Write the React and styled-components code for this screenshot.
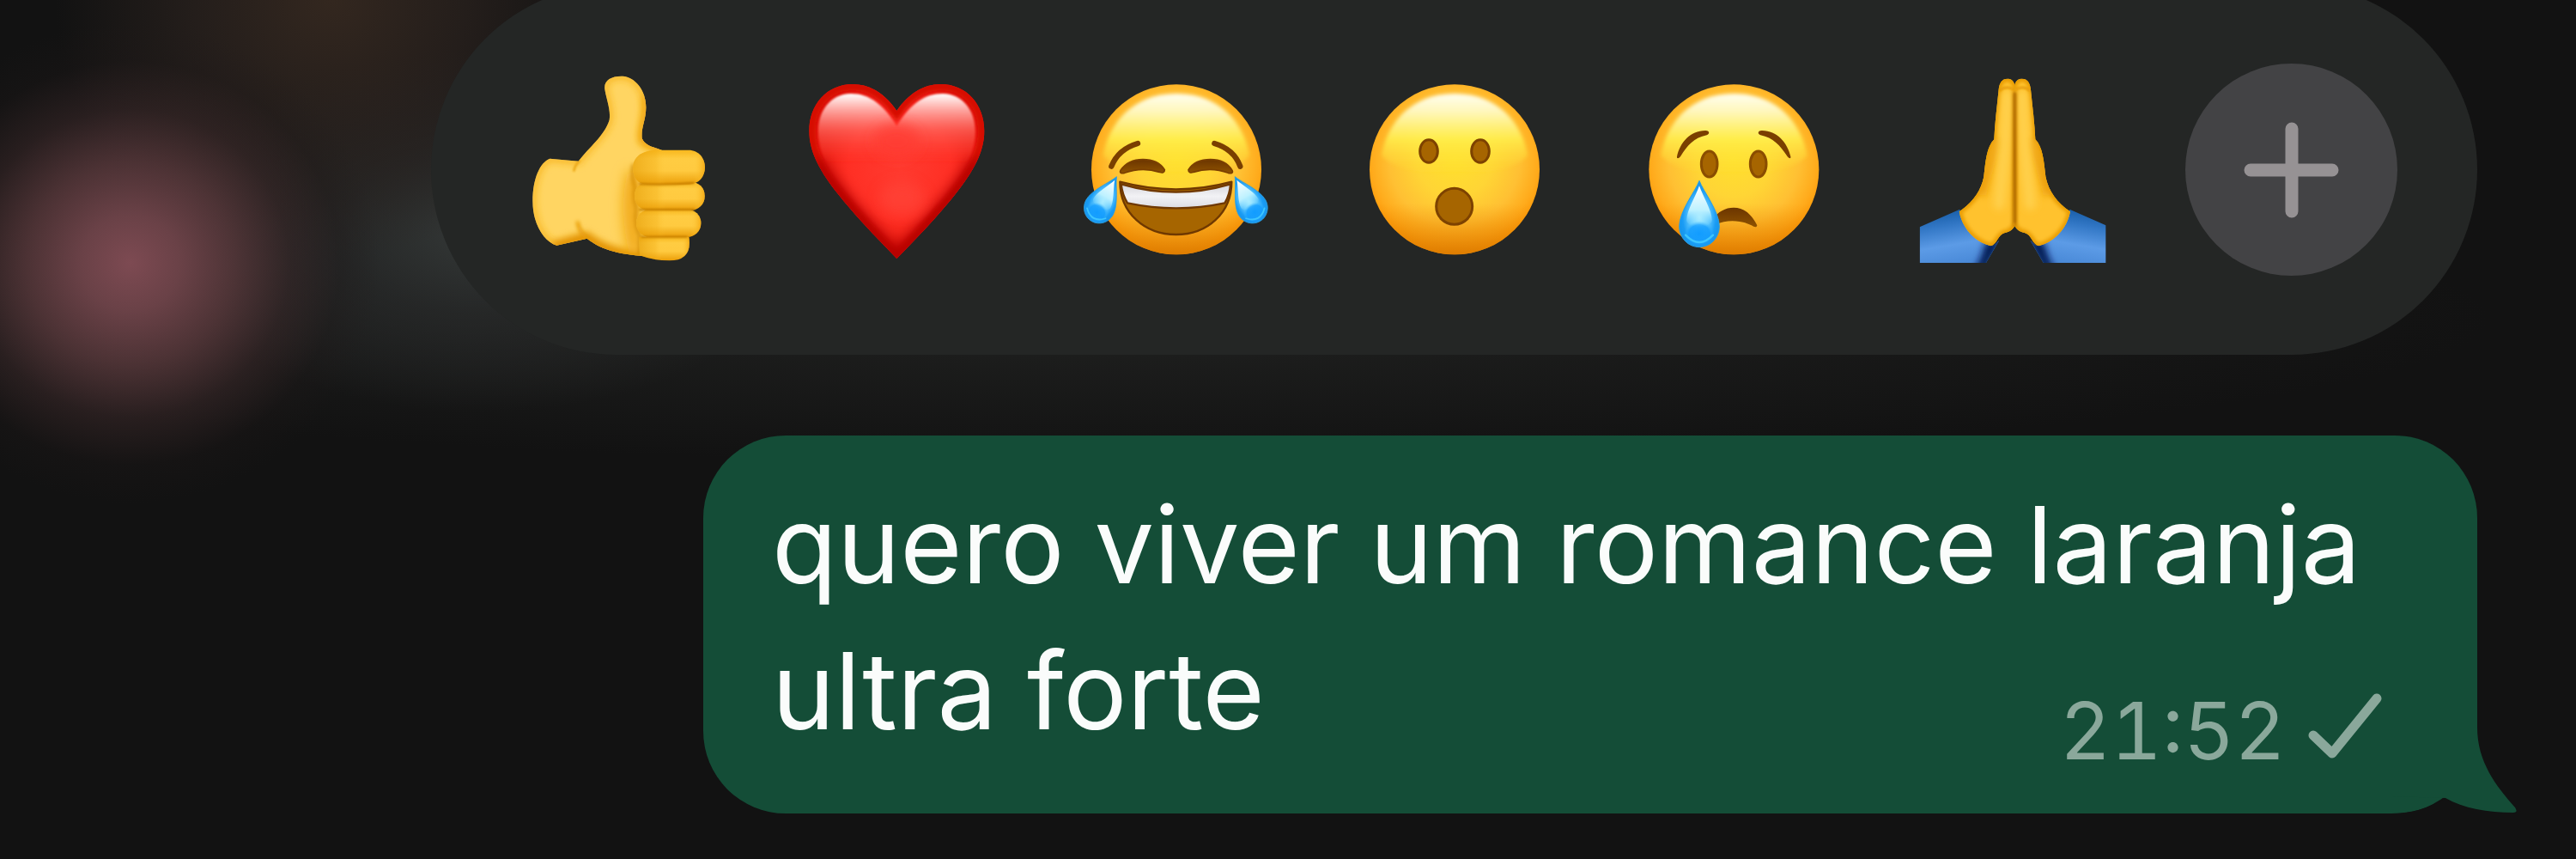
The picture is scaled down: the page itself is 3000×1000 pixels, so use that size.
import React from "react";
import styled, { createGlobalStyle } from "styled-components";

const GlobalStyle = createGlobalStyle`
  * { box-sizing: border-box; }
  body { margin: 0; background: #121212; font-family: Inter, "Liberation Sans", sans-serif; }
`;

const Screen = styled.main`
  min-height: 100vh;
  overflow: hidden;
  display: flex;
  flex-direction: column;
  align-items: flex-end;
  gap: 94px;
  padding-right: 115px;
  background:
    radial-gradient(ellipse 290px 280px at 152px 306px, #7d4a52 0%, #6f444af0 20%, #5b3a3dc8 42%, #3c292a88 64%, #20191940 84%, #12121200 100%),
    radial-gradient(ellipse 320px 300px at 385px 0px, #33271f 0%, #2c231fb0 50%, #12121200 100%),
    radial-gradient(ellipse 380px 210px at 560px 270px, #343837 0%, #2c2e2ea8 45%, #12121200 100%),
    radial-gradient(ellipse 1600px 170px at 1300px 370px, #202120 0%, #12121200 100%),
    #121212;
`;

const ReactionBar = styled.div`
  width: 2383px;
  max-width: 100%;
  height: 431px;
  margin-top: -18px;
  padding: 0 54px;
  display: grid;
  grid-template-columns: repeat(7, 1fr);
  align-items: center;
  justify-items: center;
  border-radius: 216px;
  background: #242625;
`;

const ReactionButton = styled.button`
  width: ${(p) => (p.$filled ? 247 : 260)}px;
  height: ${(p) => (p.$filled ? 247 : 260)}px;
  padding: 0;
  border: 0;
  border-radius: ${(p) => (p.$filled ? "50%" : "0")};
  background: ${(p) => (p.$filled ? "#434345" : "transparent")};
  display: flex;
  align-items: center;
  justify-content: center;
`;

const Glyph = styled.svg`
  display: block;
  width: 100%;
  height: 100%;
`;

const Bubble = styled.article`
  position: relative;
  width: 2066px;
  max-width: 100%;
  padding: 42px 111px 40px 80px;
  border-radius: 96px;
  background: #144d37;
`;

const Row = styled.div`
  display: flex;
  justify-content: space-between;
  min-height: ${(p) => (p.$last ? 188 : 170)}px;
`;

const Line = styled.span`
  font-size: 124px;
  line-height: 170px;
  color: #fafcfb;
`;

const Meta = styled.div`
  align-self: flex-end;
  display: flex;
  align-items: baseline;
  gap: 26px;
  color: #8aa89b;
`;

const Time = styled.time`
  font-size: 92px;
  line-height: 112px;
  font-variant-numeric: tabular-nums;
`;

const Check = styled.svg`
  width: 86px;
  height: 80px;
`;

const Tail = styled.svg`
  position: absolute;
  right: -46px;
  bottom: 0;
  width: 146px;
  height: 120px;
`;

function Defs() {
  const area = { filterUnits: "userSpaceOnUse", x: -100, y: -100, width: 1000, height: 1000 };
  return (
    <defs>
      <radialGradient id="face" cx=".5" cy=".44" r=".58">
        <stop offset="0" stopColor="#ffe02e" />
        <stop offset=".38" stopColor="#ffd535" />
        <stop offset=".66" stopColor="#ffc033" />
        <stop offset=".84" stopColor="#ffab1c" />
        <stop offset="1" stopColor="#fb9100" />
      </radialGradient>
      <linearGradient id="faceLow" x1="0" y1="0" x2="0" y2="1">
        <stop offset=".7" stopColor="#f08c00" stopOpacity="0" />
        <stop offset="1" stopColor="#d97800" stopOpacity=".85" />
      </linearGradient>
      <linearGradient id="faceTop" x1="0" y1="0" x2="0" y2="1">
        <stop offset="0" stopColor="#fffff0" />
        <stop offset=".22" stopColor="#fffbc8" stopOpacity=".92" />
        <stop offset=".56" stopColor="#fff250" stopOpacity=".8" />
        <stop offset="1" stopColor="#ffe030" stopOpacity="0" />
      </linearGradient>
      <linearGradient id="brow" x1="0" y1="0" x2="0" y2="1">
        <stop offset="0" stopColor="#6b3500" />
        <stop offset="1" stopColor="#8f5300" />
      </linearGradient>
      <linearGradient id="teeth" x1="0" y1="0" x2="0" y2="1">
        <stop offset="0" stopColor="#d6d6dc" />
        <stop offset=".5" stopColor="#f2f2f5" />
        <stop offset="1" stopColor="#dcdce2" />
      </linearGradient>
      <radialGradient id="tear" cx=".5" cy=".55" r=".55">
        <stop offset="0" stopColor="#b8f4ff" />
        <stop offset=".4" stopColor="#66ccff" />
        <stop offset=".75" stopColor="#1a9cf5" />
        <stop offset="1" stopColor="#1593e8" />
      </radialGradient>
      <linearGradient id="tearShine" x1="0" y1="0" x2="0" y2="1">
        <stop offset="0" stopColor="#ffffff" />
        <stop offset=".6" stopColor="#bdf1ff" />
        <stop offset="1" stopColor="#7fd8ff" stopOpacity="0" />
      </linearGradient>
      <radialGradient id="tearPool" cx=".5" cy=".6" r=".5">
        <stop offset="0" stopColor="#119cff" />
        <stop offset=".7" stopColor="#119cff" stopOpacity=".8" />
        <stop offset="1" stopColor="#35b4ff" stopOpacity="0" />
      </radialGradient>
      <filter id="soft3" {...area}><feGaussianBlur stdDeviation="3" /></filter>
      <filter id="soft6" {...area}><feGaussianBlur stdDeviation="6" /></filter>
      <filter id="soft12" {...area}><feGaussianBlur stdDeviation="12" /></filter>
      <filter id="soft22" {...area}><feGaussianBlur stdDeviation="22" /></filter>
    </defs>
  );
}

function Face({ cx }) {
  return (
    <>
      <circle cx={cx} cy="379" r="297" fill="url(#face)" />
      <circle cx={cx} cy="379" r="297" fill="url(#faceLow)" />
      <path
        d={`M${cx} 114 C${cx + 150} 114 ${cx + 235} 215 ${cx + 255} 330 C${cx + 180} 420 ${cx - 180} 420 ${cx - 255} 330 C${cx - 235} 215 ${cx - 150} 114 ${cx} 114Z`}
        fill="url(#faceTop)"
        filter="url(#soft6)"
      />
    </>
  );
}

function Tear({ transform }) {
  return (
    <g transform={transform}>
      <path d="M0 -116 C14 -78 70 -10 70 44 A70 72 0 0 1 -70 44 C-70 -10 -14 -78 0 -116Z" fill="url(#tear)" stroke="#2c9ee0" strokeWidth="3" />
      <ellipse cx="0" cy="60" rx="52" ry="44" fill="url(#tearPool)" />
      <g transform="translate(0 0)">
        <path d="M0 -98 C12 -62 46 -10 44 24 C38 52 -38 52 -44 24 C-46 -10 -12 -62 0 -98Z" fill="url(#tearShine)" />
        <path d="M-48 74 Q0 124 48 74" fill="none" stroke="#49d0ff" strokeWidth="7" strokeLinecap="round" opacity=".8" />
      </g>
    </g>
  );
}

const palm =
  "M340 128 C336 98 362 82 402 83 C446 86 484 132 484 192 C484 236 466 264 470 300 C482 328 512 330 540 342 L640 342 L520 520 L500 712 C400 708 330 692 278 650 L172 674 C128 662 88 600 88 520 C88 440 114 384 148 371 L248 380 C286 330 338 292 356 236 C362 200 344 158 340 128Z";
const indexFinger =
  "M438 402 C438 366 470 342 520 341 H632 C708 341 710 461 632 461 H490 C454 461 438 436 438 402Z";
const littleFinger = "M460 645 H634 Q646 727 566 727 Q510 727 462 709Z";

function ThumbsUp() {
  return (
    <Glyph viewBox="-6 21 780 780" aria-hidden="true">
      <Defs />
      <defs>
        <clipPath id="palmClip"><path d={palm} /></clipPath>
        <linearGradient id="finger" x1="0" y1="0" x2="0" y2="1">
          <stop offset="0" stopColor="#f8b71c" />
          <stop offset=".25" stopColor="#ffcc42" />
          <stop offset=".6" stopColor="#ffca40" />
          <stop offset="1" stopColor="#eb9e08" />
        </linearGradient>
        <linearGradient id="fingerRoot" x1="0" y1="0" x2="1" y2="0">
          <stop offset="0" stopColor="#e39a05" stopOpacity=".6" />
          <stop offset=".32" stopColor="#efa910" stopOpacity=".3" />
          <stop offset=".45" stopColor="#ffc838" stopOpacity="0" />
          <stop offset=".85" stopColor="#ffc838" stopOpacity="0" />
          <stop offset="1" stopColor="#f2a40c" stopOpacity=".8" />
        </linearGradient>
      </defs>
      <path d={palm} fill="#ffd562" />
      <g clipPath="url(#palmClip)">
        <path d={palm} fill="none" stroke="#f7b31c" strokeWidth="20" filter="url(#soft12)" />
        <path d="M484 150 C496 220 470 260 474 310 L560 345" fill="none" stroke="#eea30c" strokeWidth="26" filter="url(#soft12)" />
        <path d="M160 680 L275 646 C330 690 400 712 480 714" fill="none" stroke="#e08f00" strokeWidth="34" filter="url(#soft12)" />
        <path d="M244 590 Q252 630 278 650" fill="none" stroke="#e89b08" strokeWidth="12" filter="url(#soft6)" />
        <path d="M252 376 Q234 396 232 416" fill="none" stroke="#eca818" strokeWidth="8" filter="url(#soft3)" />
        <path d="M446 420 C430 480 420 560 450 700" fill="none" stroke="#f0a510" strokeWidth="50" filter="url(#soft22)" />
        <path d="M440 390 Q432 440 446 470 Q438 510 450 545 Q442 600 462 640 V708" fill="none" stroke="#d38b00" strokeWidth="10" filter="url(#soft6)" />
      </g>
      <path d={littleFinger} fill="url(#finger)" />
      <path d={littleFinger} fill="url(#fingerRoot)" />
      <rect x="450" y="548" width="226" height="97" rx="48" fill="url(#finger)" />
      <rect x="450" y="548" width="226" height="97" rx="48" fill="url(#fingerRoot)" />
      <rect x="444" y="452" width="245" height="99" rx="48" fill="url(#finger)" />
      <rect x="444" y="452" width="245" height="99" rx="48" fill="url(#fingerRoot)" />
      <path d={indexFinger} fill="url(#finger)" />
      <path d={indexFinger} fill="url(#fingerRoot)" />
      <g fill="none" stroke="#c27c00" strokeWidth="6" strokeLinecap="round" filter="url(#soft3)">
        <path d="M462 459 Q550 464 650 456" />
        <path d="M462 549 H652" />
        <path d="M470 644 H626" />
      </g>
    </Glyph>
  );
}

const heart =
  "M400 204 C360 146 308 111 246 111 C156 111 94 182 94 274 C94 350 134 418 196 496 C256 572 330 648 400 720 C470 648 544 572 604 496 C666 418 706 350 706 274 C706 182 644 111 554 111 C492 111 440 146 400 204Z";

function Heart() {
  return (
    <Glyph viewBox="9 21 780 780" aria-hidden="true">
      <defs>
        <clipPath id="heartClip"><path d={heart} /></clipPath>
        <radialGradient id="heartFill" gradientUnits="userSpaceOnUse" cx="410" cy="400" r="330">
          <stop offset="0" stopColor="#ff3b30" />
          <stop offset=".55" stopColor="#ff2f24" />
          <stop offset="1" stopColor="#e01509" />
        </radialGradient>
        <linearGradient id="heartShine" gradientUnits="userSpaceOnUse" x1="0" y1="144" x2="0" y2="390">
          <stop offset="0" stopColor="#ffffff" />
          <stop offset=".2" stopColor="#ffb9b4" stopOpacity=".95" />
          <stop offset=".5" stopColor="#ff7068" stopOpacity=".7" />
          <stop offset="1" stopColor="#ff3b30" stopOpacity="0" />
        </linearGradient>
      </defs>
      <path d={heart} fill="url(#heartFill)" />
      <g clipPath="url(#heartClip)">
        <path d={heart} fill="none" stroke="#d60c04" strokeWidth="44" filter="url(#soft6)" />
        <path d="M110 380 Q230 560 400 720 Q570 560 690 380" fill="none" stroke="#b50600" strokeWidth="60" filter="url(#soft22)" />
        <path
          d="M400 258 C350 176 300 144 240 144 C166 146 126 206 126 276 C126 330 146 372 170 410 H630 C654 372 674 330 674 276 C674 206 634 146 560 144 C500 144 450 176 400 258Z"
          fill="url(#heartShine)"
          filter="url(#soft3)"
        />
        <ellipse cx="400" cy="310" rx="80" ry="60" fill="#ff3b30" opacity=".7" filter="url(#soft22)" />
        <ellipse cx="418" cy="510" rx="80" ry="60" fill="#ff4a3c" opacity=".55" filter="url(#soft22)" />
      </g>
    </Glyph>
  );
}

function Joy() {
  return (
    <Glyph viewBox="-6 -9 780 780" aria-hidden="true">
      <Face cx={387} />
      <g fill="none" stroke="#7a3f00" strokeWidth="19" strokeLinecap="round">
        <path d="M160 368 Q184 308 252 288" />
        <path d="M610 368 Q588 308 520 288" />
      </g>
      <g fill="url(#brow)" stroke="#7a3f00" strokeWidth="5" strokeLinejoin="round">
        <path d="M192 382 C210 356 236 344 270 344 C306 344 332 358 346 380 C346 390 338 392 328 388 C290 376 246 376 206 391 C194 394 188 390 192 382Z" />
        <path d="M429 380 C443 358 470 344 506 344 C540 344 566 356 582 382 C586 390 580 394 568 391 C528 376 486 376 447 388 C437 392 429 390 429 380Z" />
      </g>
      <path d="M190 422 Q386 474 580 422 C580 530 496 606 386 606 C276 606 190 530 190 422Z" fill="#a66500" stroke="#6f3800" strokeWidth="7" strokeLinejoin="round" />
      <path d="M194 430 Q386 486 576 430 Q574 466 556 496 Q386 532 216 496 Q198 466 194 430Z" fill="url(#teeth)" stroke="#6f3800" strokeWidth="7" strokeLinejoin="round" />
      <Tear transform="translate(135 482) rotate(29) scale(.77)" />
      <Tear transform="translate(635 482) rotate(-29) scale(.77)" />
    </Glyph>
  );
}

function Wow() {
  return (
    <Glyph viewBox="-21 -9 780 780" aria-hidden="true">
      <Face cx={369} />
      <g fill="#a66500" stroke="#7d4200" strokeWidth="9">
        <ellipse cx="279" cy="315" rx="31" ry="40" />
        <ellipse cx="459" cy="315" rx="31" ry="40" />
        <circle cx="368" cy="508" r="63" />
      </g>
    </Glyph>
  );
}

function Sad() {
  return (
    <Glyph viewBox="-6 -9 780 780" aria-hidden="true">
      <Face cx={385} />
      <g fill="#7a3f00">
        <path d="M186 334 C196 284 234 242 286 243 C302 244 300 256 290 259 C246 268 222 294 198 334 C192 342 184 342 186 334Z" />
        <path d="M583 334 C572 284 534 242 482 243 C466 244 468 256 478 259 C522 268 546 294 572 334 C578 342 585 342 583 334Z" />
      </g>
      <g fill="#a66500" stroke="#8a4d00" strokeWidth="9">
        <ellipse cx="299" cy="360" rx="28" ry="45" />
        <ellipse cx="470" cy="360" rx="28" ry="45" />
      </g>
      <path d="M300 574 C320 530 350 512 384 512 C422 512 448 538 466 574 C464 584 456 580 446 574 C410 554 356 554 324 570 C308 584 300 586 300 574Z" fill="url(#brow)" />
      <Tear transform="translate(264 534)" />
    </Glyph>
  );
}

const hand =
  "M406 84 C402 66 392 62 380 62 C362 62 352 76 350 100 C344 160 336 220 334 274 C308 300 304 350 298 404 C288 456 256 496 212 526 C222 580 262 630 322 646 C346 640 346 606 372 600 C390 596 400 588 408 572Z";
const sleeve = "M74 580 L214 518 C226 580 270 636 330 646 L352 626 L306 705 H74Z";

function HalfPray() {
  return (
    <>
      <path d={sleeve} fill="url(#sleeve)" />
      <g clipPath="url(#sleeveClip)">
        <path d="M364 610 L300 730 H270 Q296 690 306 640Z" fill="#001450" stroke="#001450" strokeWidth="8" filter="url(#soft12)" />
      </g>
      <path d={hand} fill="#ffc22e" />
      <g clipPath="url(#handClip)">
        <path d={hand} fill="none" stroke="#e99b06" strokeWidth="20" filter="url(#soft6)" />
        <path d="M346 270 Q310 400 290 470" fill="none" stroke="#eda10a" strokeWidth="30" filter="url(#soft12)" />
        <path d="M380 120 Q372 330 352 500" fill="none" stroke="#ffd04c" strokeWidth="40" strokeLinecap="round" filter="url(#soft12)" />
        <path d="M408 110 V580" stroke="#b87000" strokeWidth="14" filter="url(#soft6)" />
        <path d="M352 104 Q376 84 404 100" fill="none" stroke="#e79c08" strokeWidth="8" filter="url(#soft3)" />
      </g>
    </>
  );
}

function Pray() {
  return (
    <Glyph viewBox="9 -9 780 780" aria-hidden="true">
      <defs>
        <clipPath id="handClip"><path d={hand} /></clipPath>
        <clipPath id="sleeveClip"><path d={sleeve} /></clipPath>
        <clipPath id="prayFrame"><rect x="74" y="40" width="650" height="680" /></clipPath>
        <linearGradient id="sleeve" x1=".3" y1="0" x2=".55" y2="1">
          <stop offset="0" stopColor="#155ba6" />
          <stop offset=".3" stopColor="#3378c6" />
          <stop offset=".65" stopColor="#5c9be6" />
          <stop offset="1" stopColor="#4a8ad8" />
        </linearGradient>
      </defs>
      <g clipPath="url(#prayFrame)">
        <HalfPray />
        <g transform="matrix(-1 0 0 1 812 0)"><HalfPray /></g>
        <path d="M406 110 V565" stroke="#a76300" strokeWidth="5" filter="url(#soft3)" />
      </g>
    </Glyph>
  );
}

const reactions = [
  { label: "Curtir", Icon: ThumbsUp },
  { label: "Amei", Icon: Heart },
  { label: "Haha", Icon: Joy },
  { label: "Uau", Icon: Wow },
  { label: "Triste", Icon: Sad },
  { label: "Gratidão", Icon: Pray },
];

export default function App() {
  return (
    <>
      <GlobalStyle />
      <Screen>
        <ReactionBar role="toolbar" aria-label="Reações">
          {reactions.map(({ label, Icon }) => (
            <ReactionButton key={label} type="button" aria-label={label}>
              <Icon />
            </ReactionButton>
          ))}
          <ReactionButton $filled type="button" aria-label="Mais reações">
            <Glyph viewBox="0 0 247 247" aria-hidden="true">
              <path d="M76 124H171M124 76V172" stroke="#969294" strokeWidth="15" strokeLinecap="round" />
            </Glyph>
          </ReactionButton>
        </ReactionBar>
        <Bubble>
          <Row>
            <Line>quero viver um romance laranja</Line>
          </Row>
          <Row $last>
            <Line>ultra forte</Line>
            <Meta>
              <Time dateTime="21:52">21:52</Time>
              <Check viewBox="0 0 86 80" aria-label="Enviada" role="img">
                <path d="M6 52L28 73L80 9" fill="none" stroke="currentColor" strokeWidth="11" strokeLinecap="round" strokeLinejoin="round" />
              </Check>
            </Meta>
          </Row>
          <Tail viewBox="0 0 146 120" aria-hidden="true">
            <path d="M0 120C26 120 48 112 63 102C80 112 112 120 142 120Q148 119 145 114L130 120H0Z" fill="#121212" />
            <path d="M0 0H100V20C100 60 122 88 144 113Q148 119 142 119C112 119 84 114 63 102L0 100Z" fill="#144d37" />
          </Tail>
        </Bubble>
      </Screen>
    </>
  );
}
